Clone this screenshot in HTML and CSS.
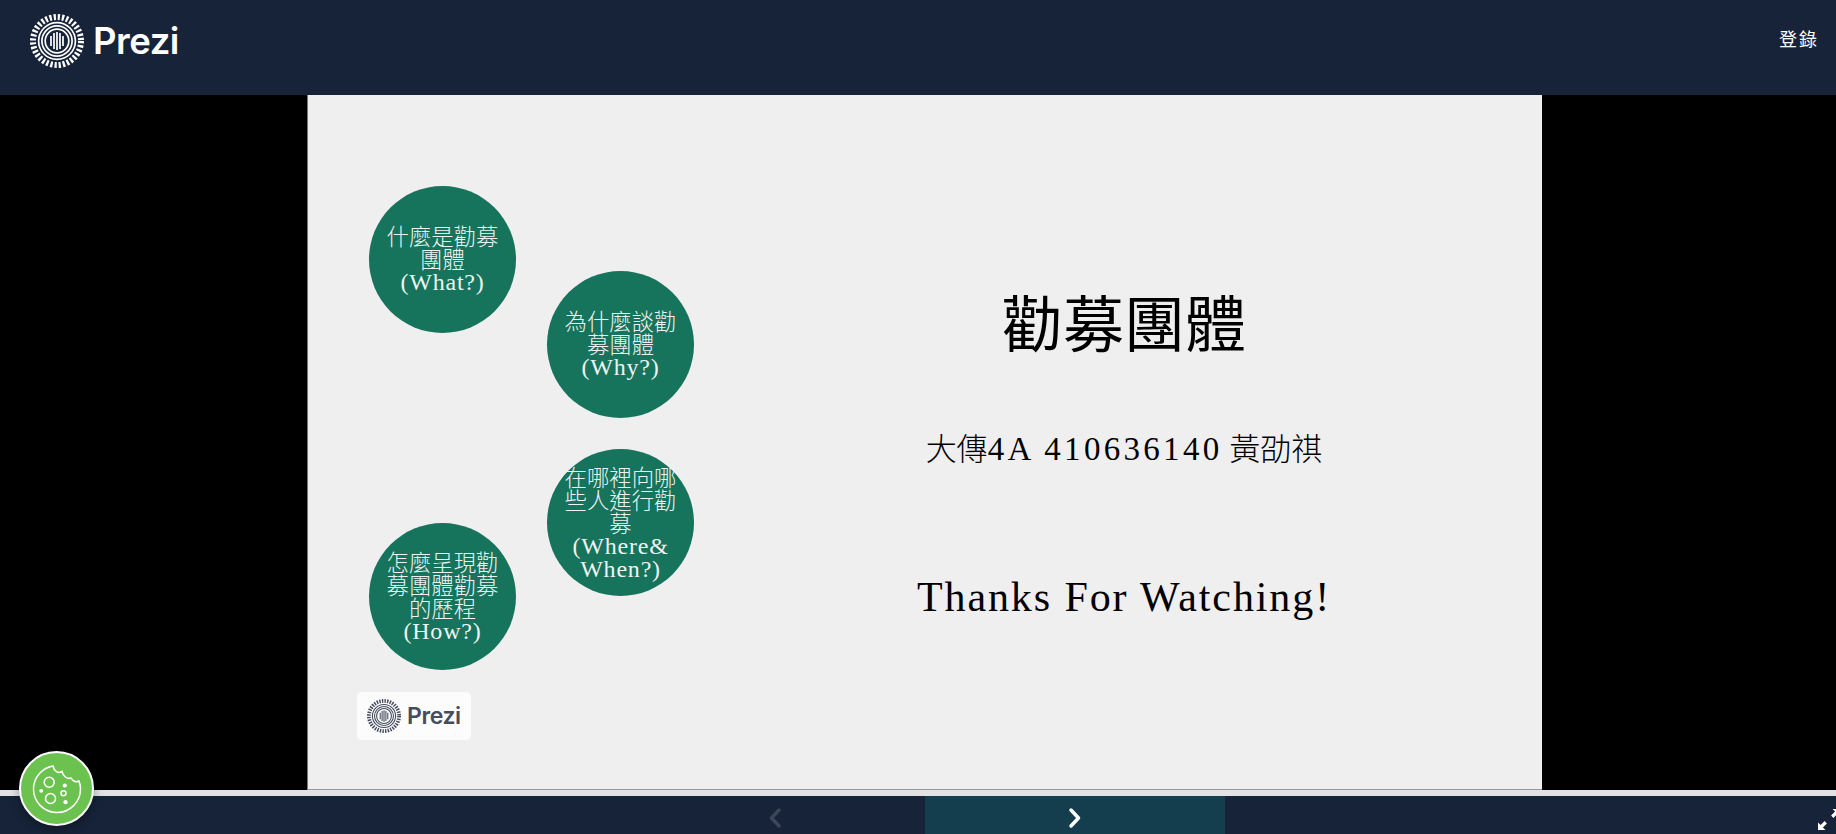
FILE: index.html
```html
<!DOCTYPE html>
<html lang="zh-Hant">
<head>
  <meta charset="UTF-8" />
  <title>勸募團體 - Prezi</title>
  <link rel="stylesheet" href="styles.css">
</head>
<body>

<svg class="defs" aria-hidden="true">
  <symbol id="prezi-mark" viewBox="0 0 54 54">
    <g fill="none" stroke="currentColor">
      <circle cx="27" cy="27" r="24" stroke-width="6" stroke-dasharray="2.3 1.89"/>
      <circle cx="27" cy="27" r="18.4" stroke-width="1.7"/>
      <circle cx="27" cy="27" r="15.1" stroke-width="1.7"/>
      <circle cx="27" cy="27" r="11.8" stroke-width="1.7"/>
      <path stroke-width="1.7" d="M21 22v10M24 19v16M27 18v18M30 19v16M33 22v10"/>
    </g>
  </symbol>
</svg>

<header class="topbar">
  <a class="logo">
    <svg class="logo-mark"><use href="#prezi-mark"/></svg>
    <span class="logo-name">Prezi</span>
  </a>
  <a class="login">登錄</a>
</header>

<main class="viewer">
  <section class="slide">
    <div class="bubble bubble-what">什麼是勸募<br>團體<span class="latin">(What?)</span></div>
    <div class="bubble bubble-why">為什麼談勸<br>募團體<span class="latin">(Why?)</span></div>
    <div class="bubble bubble-where">在哪裡向哪<br>些人進行勸<br>募<span class="latin">(Where&amp;<br>When?)</span></div>
    <div class="bubble bubble-how">怎麼呈現勸<br>募團體勸募<br>的歷程<span class="latin">(How?)</span></div>

    <div class="badge">
      <svg class="badge-mark"><use href="#prezi-mark"/></svg>
      <span class="badge-name">Prezi</span>
    </div>

    <div class="slide-text">
      <h1 class="slide-title">勸募團體</h1>
      <p class="slide-author">大傳<span class="latin">4A 410636140</span> 黃劭祺</p>
      <p class="slide-thanks">Thanks For Watching!</p>
    </div>
  </section>
</main>

<div class="progress"></div>

<footer class="controls">
  <button class="nav nav-prev">
    <svg width="14" height="22" viewBox="0 0 14 22"><path d="M11 3 3.5 11 11 19" /></svg>
  </button>
  <button class="nav nav-next">
    <svg width="14" height="22" viewBox="0 0 14 22"><path d="M3 3 10.5 11 3 19" /></svg>
  </button>
  <button class="fullscreen">
    <svg width="24" height="24" viewBox="0 0 24 24">
      <path d="M1 22V14.500L3.600 17.100 7.600 13.100 9.900 15.400 5.900 19.400 8.500 22Z"/>
      <path d="M23 1V8.500L20.400 5.900 16.400 9.900 14.100 7.600 18.100 3.600 15.500 1Z"/>
    </svg>
  </button>
</footer>

<button class="cookie">
  <svg width="54" height="54" viewBox="0 0 54 54" fill="none" stroke="#fff" stroke-width="1.5">
    <path d="M23 4C13 5.500 3.500 15 3.500 27 3.500 40 14 50.500 27 50.500 40 50.500 50.500 40 50.500 27 50.500 24 50 21.500 49 19 46 20.500 43 19.500 41 16 37 17.500 33 14 32 9.500 28 12 24 9 23 4Z"/>
    <circle cx="19.200" cy="20.200" r="5"/>
    <circle cx="20.500" cy="36.500" r="5"/>
    <circle cx="33.500" cy="31.200" r="2.500"/>
    <circle cx="11.200" cy="28.800" r="1.900" fill="#fff" stroke="none"/>
    <circle cx="34.800" cy="23.500" r="2.100" fill="#fff" stroke="none"/>
    <circle cx="35.500" cy="40.200" r="2.100" fill="#fff" stroke="none"/>
  </svg>
</button>

</body>
</html>
```

FILE: styles.css
```css
* { box-sizing: border-box; }
html, body {
  height: 100%;
}
body {
  margin: 0;
  display: flex;
  flex-direction: column;
  overflow: hidden;
  background: #000;
  font-family: "Noto Sans CJK TC", "Liberation Serif", serif;
}
.defs {
  width: 0;
  height: 0;
  position: absolute;
}
.latin {
  font-family: "Liberation Serif", "Noto Sans CJK TC", serif;
}

/* top bar */
.topbar {
  height: 95px;
  flex: none;
  background: #162338;
  display: flex;
  justify-content: space-between;
  align-items: flex-start;
  padding: 14px 17px 0 30px;
  color: #fff;
}
.logo {
  display: flex;
  align-items: center;
  gap: 9px;
}
.logo-mark {
  width: 54px;
  height: 54px;
}
.logo-name {
  font-family: Inter, sans-serif;
  font-size: 36.5px;
  font-weight: 600;
  letter-spacing: -0.5px;
}
.login {
  font-size: 18px;
  font-weight: 400;
  letter-spacing: 2px;
  line-height: 24px;
  margin-top: 12px;
}

/* slide */
.viewer {
  height: 695px;
  flex: none;
  padding-left: 307px;
}
.slide {
  position: relative;
  width: 1235px;
  height: 695px;
  background: #efefef;
  border-left: 1px solid #777;
  border-bottom: 1px solid #999;
}
.bubble {
  position: absolute;
  width: 147px;
  height: 147px;
  border-radius: 50%;
  background: #16735c;
  color: #eef4f2;
  padding-top: 38px;
  text-align: center;
  font-size: 22.4px;
  font-weight: 300;
  line-height: 23px;
}
.bubble .latin {
  display: block;
  margin-top: 1px;
  font-size: 24px;
  letter-spacing: 0.8px;
}
.bubble-what { left: 61px; top: 91px; }
.bubble-why { left: 239px; top: 176px; }
.bubble-where { left: 239px; top: 354px; padding-top: 16px; }
.bubble-how { left: 61px; top: 428px; padding-top: 27px; }

.badge {
  position: absolute;
  left: 49px;
  top: 597px;
  width: 114px;
  height: 48px;
  background: #fcfcfd;
  border-radius: 5px;
  display: flex;
  align-items: center;
  gap: 6px;
  padding-left: 10px;
  color: #454c5e;
}
.badge-mark {
  width: 34px;
  height: 34px;
}
.badge-name {
  font-family: Inter, sans-serif;
  font-size: 23px;
  font-weight: 600;
  letter-spacing: -0.4px;
}

.slide-text {
  position: absolute;
  left: 398px;
  right: 0;
  top: 196px;
  display: flex;
  flex-direction: column;
  align-items: center;
  color: #000;
}
.slide-title {
  margin: 0;
  font-size: 61px;
  font-weight: 400;
  line-height: 60px;
}
.slide-author {
  margin: 76px 0 0;
  font-size: 31px;
  font-weight: 300;
  line-height: 40px;
}
.slide-author .latin {
  font-size: 33px;
  letter-spacing: 3.3px;
}
.slide-thanks {
  margin: 103px 0 0;
  font-family: "Liberation Serif", serif;
  font-size: 42px;
  line-height: 50px;
  letter-spacing: 1.9px;
}

/* bottom bar */
.progress {
  height: 6px;
  flex: none;
  background: #e2e1e3;
}
.controls {
  height: 38px;
  flex: none;
  background: #162338;
  display: flex;
  padding-left: 625px;
  overflow: hidden;
}
.nav {
  width: 300px;
  flex: none;
  border: 0;
  padding: 5px 0 0;
  background: none;
  display: flex;
  align-items: center;
  justify-content: center;
}
.nav svg {
  fill: none;
  stroke-width: 3.5;
  stroke-linecap: round;
  stroke-linejoin: round;
}
.nav-prev svg { stroke: #3c4657; }
.nav-next { background: #143d4e; }
.nav-next svg { stroke: #fff; }
.fullscreen {
  border: 0;
  padding: 0;
  background: none;
  margin-left: 592px;
  flex: none;
  width: 24px;
  height: 24px;
  margin-top: 12px;
  fill: #fff;
}

.cookie {
  position: absolute;
  left: 19px;
  top: 751px;
  width: 75px;
  height: 75px;
  border-radius: 50%;
  border: 2px solid #fff;
  background: #6cc24f;
  box-shadow: 0 3px 10px rgba(0, 0, 0, 0.35);
  padding: 0;
  display: flex;
  align-items: center;
  justify-content: center;
}
```
